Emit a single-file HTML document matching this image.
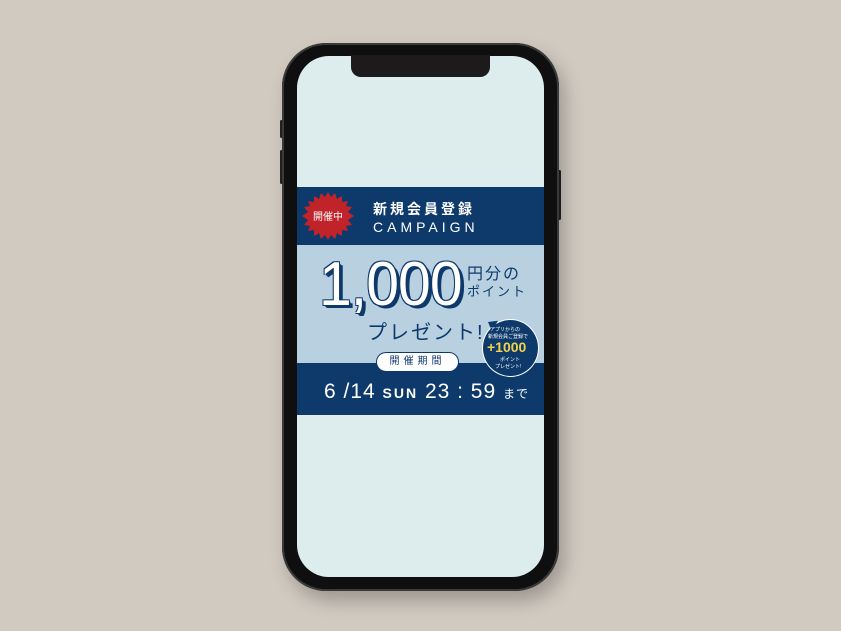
<!DOCTYPE html>
<html><head><meta charset="utf-8"><style>
*{margin:0;padding:0;box-sizing:border-box}
body{width:841px;height:631px;background:#d1cac1;position:relative;overflow:hidden;font-family:"Liberation Sans","Noto Sans CJK JP",sans-serif}
.phone{position:absolute;left:282px;top:43px;width:277px;height:548px;border-radius:44px;background:#0f0f10;box-shadow:6px 10px 18px rgba(0,0,0,.25),inset 0 0 0 2px #3a3a3a}
.screen{position:absolute;left:297px;top:56px;width:247px;height:521px;border-radius:32px;background:#ddecec;overflow:hidden}
.notch{position:absolute;left:351px;top:55px;width:139px;height:22px;background:#222;border-radius:0 0 10px 10px}
.btn{position:absolute;background:#222;width:3px;border-radius:2px}
.b{position:absolute;left:0;width:247px}
.w{color:#fff;position:absolute;white-space:nowrap}
.n{color:#0e3a6b;position:absolute;white-space:nowrap}
</style></head><body>
<div class="btn" style="left:280px;top:120px;height:18px"></div>
<div class="btn" style="left:280px;top:150px;height:34px"></div>
<div class="btn" style="left:558px;top:170px;height:50px"></div>
<div class="phone"></div>
<div class="screen">
 <div class="b" style="top:131px;height:58px;background:#0e3a6b"></div>
 <div class="b" style="top:189px;height:118px;background:#b9d0e1"></div>
 <div class="b" style="top:307px;height:52px;background:#0e3a6b"></div>
 <svg style="position:absolute;left:5px;top:136px" width="52" height="48" viewBox="0 0 52 48"><polygon fill="#c0232a" points="26,0 29,5 33,1 35,7 40,4 40,10 46,9 44,14 50,15 46,20 52,24 46,28 50,33 44,34 46,39 40,38 40,44 35,41 33,47 29,43 26,48 23,43 19,47 17,41 12,44 12,38 6,39 8,34 2,33 6,28 0,24 6,20 2,15 8,14 6,9 12,10 12,4 17,7 19,1 23,5"/><text x="26" y="28" fill="#fff" font-size="10" text-anchor="middle" font-family="Noto Sans CJK JP">開催中</text></svg>
 <div class="w" style="left:76px;top:143px;font-size:14px;letter-spacing:3px;font-weight:bold">新規会員登録</div>
 <div class="w" style="left:76px;top:163px;font-size:14px;letter-spacing:4px">CAMPAIGN</div>
 <div style="position:absolute;left:22px;top:198px;font-size:62px;line-height:62px;font-weight:normal;color:#fff;letter-spacing:-1px;transform:scaleX(0.95);transform-origin:left;text-shadow:-1px -1px 0 #0e3a6b,1px -1px 0 #0e3a6b,-1px 1px 0 #0e3a6b,1px 1px 0 #0e3a6b,2px 2px 0 #0e3a6b,3px 3px 0 #0e3a6b,4px 3px 0 #0e3a6b">1,000</div>
 <div class="n" style="left:170px;top:204px;font-size:16px;letter-spacing:2px">円分の</div>
 <div class="n" style="left:170px;top:225px;font-size:13px;letter-spacing:2px">ポイント</div>
 <div class="n" style="left:70px;top:260px;font-size:20px;letter-spacing:2px">プレゼント!</div>
 <div style="position:absolute;left:185px;top:263px;width:57px;height:58px;border-radius:50%;background:#0e3a6b;border:1px solid #fff"></div>
 <div style="position:absolute;left:183px;top:260px;width:0;height:0;border-left:8px solid transparent;border-right:8px solid #0e3a6b;border-top:6px solid transparent;border-bottom:6px solid transparent;transform:rotate(30deg)"></div>
 <div class="w" style="left:193px;top:270px;font-size:5px">アプリからの</div>
 <div class="w" style="left:191px;top:277px;font-size:5px">新規会員ご登録で</div>
 <div style="position:absolute;left:190px;top:283px;font-size:14px;font-weight:bold;color:#f0d34a">+1000</div>
 <div class="w" style="left:203px;top:300px;font-size:5px">ポイント</div>
 <div class="w" style="left:198px;top:307px;font-size:5px">プレゼント!</div>
 <div style="position:absolute;left:79px;top:296px;width:83px;height:20px;border-radius:10px;background:#fff;border:1px solid #0e3a6b;color:#0e3a6b;font-size:10px;text-align:center;line-height:18px;letter-spacing:4px">開催期間</div>
 <div class="w" style="left:27px;top:324px;font-size:21px;letter-spacing:1px">6 /14 <span style="font-size:14px;font-weight:bold;letter-spacing:2px">SUN</span> 23 : 59 <span style="font-size:12px">まで</span></div>
</div>
<div class="notch" style="background:#1c1a1b"></div>
</body></html>
